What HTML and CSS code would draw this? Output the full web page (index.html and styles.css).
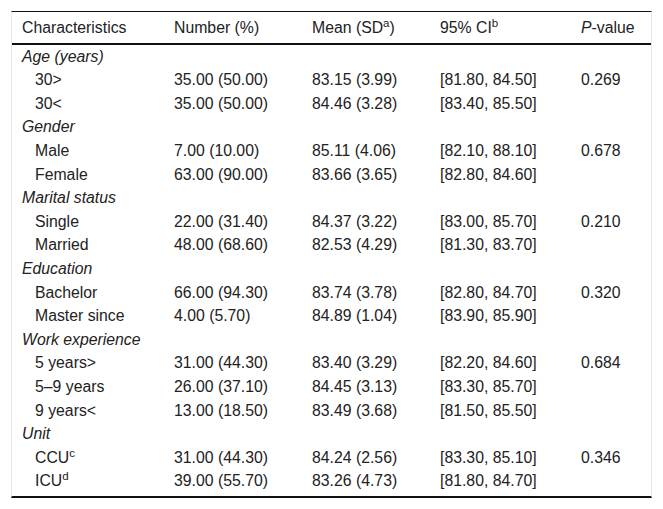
FILE: index.html
```html
<!DOCTYPE html>
<html>
<head>
<meta charset="utf-8">
<link rel="stylesheet" href="styles.css">
</head>
<body>
<div class="wrap">
<table class="data">
<colgroup>
<col class="c1"><col class="c2"><col class="c3"><col class="c4"><col class="c5">
</colgroup>
<thead>
<tr><th>Characteristics</th><th>Number (%)</th><th>Mean (SD<sup>a</sup>)</th><th>95% CI<sup>b</sup></th><th><i>P</i>-value</th></tr>
</thead>
<tbody>
<tr><td class="grp" colspan="5">Age (years)</td></tr>
<tr><td class="sub">30&gt;</td><td>35.00 (50.00)</td><td>83.15 (3.99)</td><td>[81.80, 84.50]</td><td>0.269</td></tr>
<tr><td class="sub">30&lt;</td><td>35.00 (50.00)</td><td>84.46 (3.28)</td><td>[83.40, 85.50]</td><td></td></tr>
<tr><td class="grp" colspan="5">Gender</td></tr>
<tr><td class="sub">Male</td><td>7.00 (10.00)</td><td>85.11 (4.06)</td><td>[82.10, 88.10]</td><td>0.678</td></tr>
<tr><td class="sub">Female</td><td>63.00 (90.00)</td><td>83.66 (3.65)</td><td>[82.80, 84.60]</td><td></td></tr>
<tr><td class="grp" colspan="5">Marital status</td></tr>
<tr><td class="sub">Single</td><td>22.00 (31.40)</td><td>84.37 (3.22)</td><td>[83.00, 85.70]</td><td>0.210</td></tr>
<tr><td class="sub">Married</td><td>48.00 (68.60)</td><td>82.53 (4.29)</td><td>[81.30, 83.70]</td><td></td></tr>
<tr><td class="grp" colspan="5">Education</td></tr>
<tr><td class="sub">Bachelor</td><td>66.00 (94.30)</td><td>83.74 (3.78)</td><td>[82.80, 84.70]</td><td>0.320</td></tr>
<tr><td class="sub">Master since</td><td>4.00 (5.70)</td><td>84.89 (1.04)</td><td>[83.90, 85.90]</td><td></td></tr>
<tr><td class="grp" colspan="5">Work experience</td></tr>
<tr><td class="sub">5 years&gt;</td><td>31.00 (44.30)</td><td>83.40 (3.29)</td><td>[82.20, 84.60]</td><td>0.684</td></tr>
<tr><td class="sub">5–9 years</td><td>26.00 (37.10)</td><td>84.45 (3.13)</td><td>[83.30, 85.70]</td><td></td></tr>
<tr><td class="sub">9 years&lt;</td><td>13.00 (18.50)</td><td>83.49 (3.68)</td><td>[81.50, 85.50]</td><td></td></tr>
<tr><td class="grp" colspan="5">Unit</td></tr>
<tr><td class="sub">CCU<sup>c</sup></td><td>31.00 (44.30)</td><td>84.24 (2.56)</td><td>[83.30, 85.10]</td><td>0.346</td></tr>
<tr class="last"><td class="sub">ICU<sup>d</sup></td><td>39.00 (55.70)</td><td>83.26 (4.73)</td><td>[81.80, 84.70]</td><td></td></tr>
</tbody>
</table>
</div>
</body>
</html>
```

FILE: styles.css
```css
html, body {
  margin: 0;
  padding: 0;
  background: #fff;
}
body {
  padding: 11px;
  font-family: "Liberation Sans", Arial, sans-serif;
  font-size: 15.8px;
  color: #222;
}
.wrap {
  border-left: 1px solid #e6e6e6;
  border-right: 1px solid #e6e6e6;
  border-top: 1px solid #111;
  border-bottom: 2px solid #111;
  padding-bottom: 3px;
}
.data {
  width: 100%;
  border-collapse: collapse;
}
.c1 { width: 152px; }
.c2 { width: 138px; }
.c3 { width: 128px; }
.c4 { width: 141px; }
.c5 { width: auto; }
.data th {
  font-weight: normal;
  text-align: left;
  padding: 6px 0 6px 10px;
  line-height: 19px;
  border-bottom: 2px solid #111;
  white-space: nowrap;
}
.data td {
  padding: 2.6px 0 2.6px 10px;
  line-height: 18.4px;
  white-space: nowrap;
}
.data td.grp {
  font-style: italic;
}
.data td.sub {
  padding-left: 23px;
}
.data sup {
  font-size: 11.5px;
  line-height: 0;
  vertical-align: 6px;
}
```
